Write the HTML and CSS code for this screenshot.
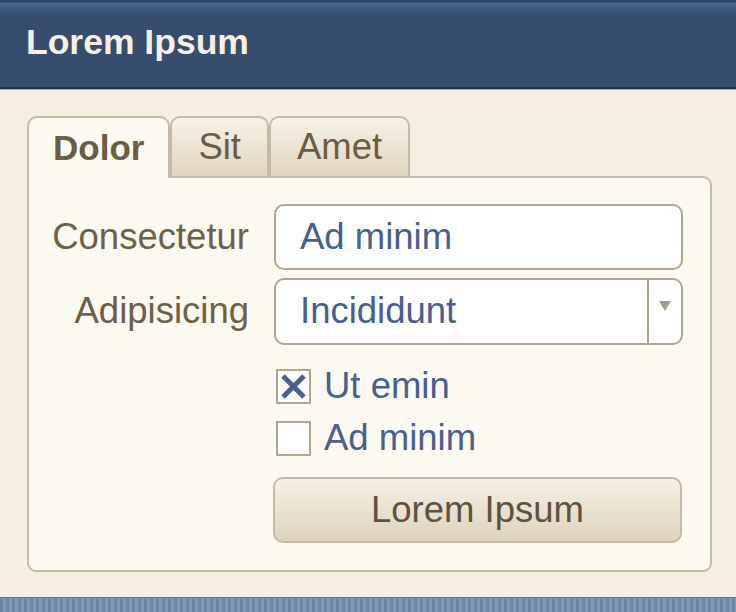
FILE: index.html
```html
<!DOCTYPE html>
<html>
<head>
<meta charset="utf-8">
<link rel="stylesheet" href="styles.css">
</head>
<body>
<div class="page">
  <header class="topbar"><h1 class="title">Lorem Ipsum</h1></header>
  <main class="main">
    <div class="tabs">
      <div class="tab tab-active">Dolor</div>
      <div class="tab">Sit</div>
      <div class="tab">Amet</div>
    </div>
    <section class="panel">
      <div class="row row-input">
        <label class="label">Consectetur</label>
        <div class="input">Ad minim</div>
      </div>
      <div class="row row-select">
        <label class="label">Adipisicing</label>
        <div class="select">
          <span class="select-value">Incididunt</span>
          <span class="select-arrow"><svg width="12" height="10" viewBox="0 0 12 10"><path d="M0 0 L12 0 L6 10 Z" fill="#a39c86"/></svg></span>
        </div>
      </div>
      <div class="row row-checks">
        <div class="label"></div>
        <div class="checks">
          <div class="check">
            <span class="box"><svg width="31" height="31" viewBox="0 0 31 31"><path d="M5 5 L26 26 M26 5 L5 26" stroke="#46608f" stroke-width="5" stroke-linecap="butt"/></svg></span>
            <span class="check-label">Ut emin</span>
          </div>
          <div class="check">
            <span class="box"></span>
            <span class="check-label">Ad minim</span>
          </div>
        </div>
      </div>
      <div class="row row-button">
        <div class="label"></div>
        <button class="button">Lorem Ipsum</button>
      </div>
    </section>
  </main>
  <footer class="stripes"></footer>
</div>
</body>
</html>
```
FILE: styles.css
```css
* { box-sizing: border-box; }
html, body { margin: 0; padding: 0; }
body {
  background: #f5eee2;
  font-family: "Liberation Sans", Arial, sans-serif;
  font-size: 36.5px;
}
.page {
  width: 736px;
  height: 612px;
  display: flex;
  flex-direction: column;
  overflow: hidden;
}
.topbar {
  height: 89px;
  flex: none;
  background: linear-gradient(to bottom, #2f4766 0px, #2f4766 2px, #48668f 3px, #3c577c 10px, #364d6d 18px, #364d6d 100%);
  border-bottom: 2px solid #22344d;
  box-shadow: 0 1px 0 #9aafc7;
  display: flex;
  align-items: center;
  padding-left: 26px;
  position: relative;
  z-index: 1;
}
.title {
  margin: 0;
  font-size: 35.5px;
  font-weight: bold;
  color: #f6f0e4;
  line-height: 1;
  margin-top: -2px;
}
.main {
  flex: 1;
  padding: 27px 24px 0 27px;
}
.tabs {
  display: flex;
  align-items: flex-end;
  height: 60px;
}
.tab {
  height: 60px;
  padding: 0 26px;
  border: 2px solid #c4baa6;
  border-bottom: none;
  border-radius: 10px 10px 0 0;
  background: linear-gradient(to bottom, #f7f2e8, #e0d6c0);
  color: #6a5c45;
  display: flex;
  align-items: center;
  line-height: 1;
}
.tab-active {
  height: 62px;
  margin-bottom: -2px;
  padding: 0 24px 2px;
  background: #fcf9f1;
  font-weight: bold;
  font-size: 35px;
  color: #6a5c45;
  position: relative;
  z-index: 1;
}
.panel {
  width: 685px;
  height: 396px;
  border: 2px solid #c4baa6;
  border-radius: 0 9px 9px 9px;
  background: #fcf9f1;
  padding: 26px 27px 0 0;
  display: flex;
  flex-direction: column;
}
.row {
  display: flex;
  align-items: center;
  gap: 25px;
}
.row-input { margin-bottom: 8px; }
.row-select { margin-bottom: 24px; }
.row-checks { margin-bottom: 21px; }
.label {
  width: 220px;
  flex: none;
  text-align: right;
  color: #6e6048;
  line-height: 1;
}
.input {
  width: 409px;
  height: 66px;
  border: 2px solid #b0a58e;
  border-radius: 10px;
  background: #ffffff;
  color: #46608f;
  display: flex;
  align-items: center;
  padding-left: 24px;
  line-height: 1;
}
.select {
  width: 409px;
  height: 67px;
  border: 2px solid #b0a58e;
  border-radius: 10px;
  background: #ffffff;
  color: #46608f;
  display: flex;
  align-items: stretch;
  line-height: 1;
}
.select-value {
  flex: 1;
  display: flex;
  align-items: center;
  padding-left: 24px;
}
.select-arrow {
  width: 34px;
  border-left: 2px solid #b0a58e;
  display: flex;
  align-items: flex-start;
  justify-content: center;
  padding-top: 21px;
}
.checks {
  display: flex;
  flex-direction: column;
  gap: 17px;
  padding-left: 2px;
}
.check {
  display: flex;
  align-items: center;
  gap: 13px;
  height: 35px;
}
.box {
  width: 35px;
  height: 35px;
  border: 2px solid #b0a58e;
  background: #ffffff;
  display: block;
}
.box svg { display: block; }
.check-label {
  color: #46608f;
  line-height: 1;
}
.button {
  height: 66px;
  width: 409px;
  margin-left: -1px;
  border: 2px solid #c4baa6;
  border-radius: 10px;
  background: linear-gradient(to bottom, #f6f0e5, #ddd3bd);
  color: #5d5340;
  font-family: "Liberation Sans", Arial, sans-serif;
  font-size: 36.5px;
  padding: 0;
  line-height: 1;
}
.stripes {
  height: 15px;
  flex: none;
  background: repeating-linear-gradient(to right, #6c86a4 0px, #6c86a4 3px, #809ab7 3px, #809ab7 6px);
  box-shadow: inset 0 1px 0 #5d7695;
}
```
